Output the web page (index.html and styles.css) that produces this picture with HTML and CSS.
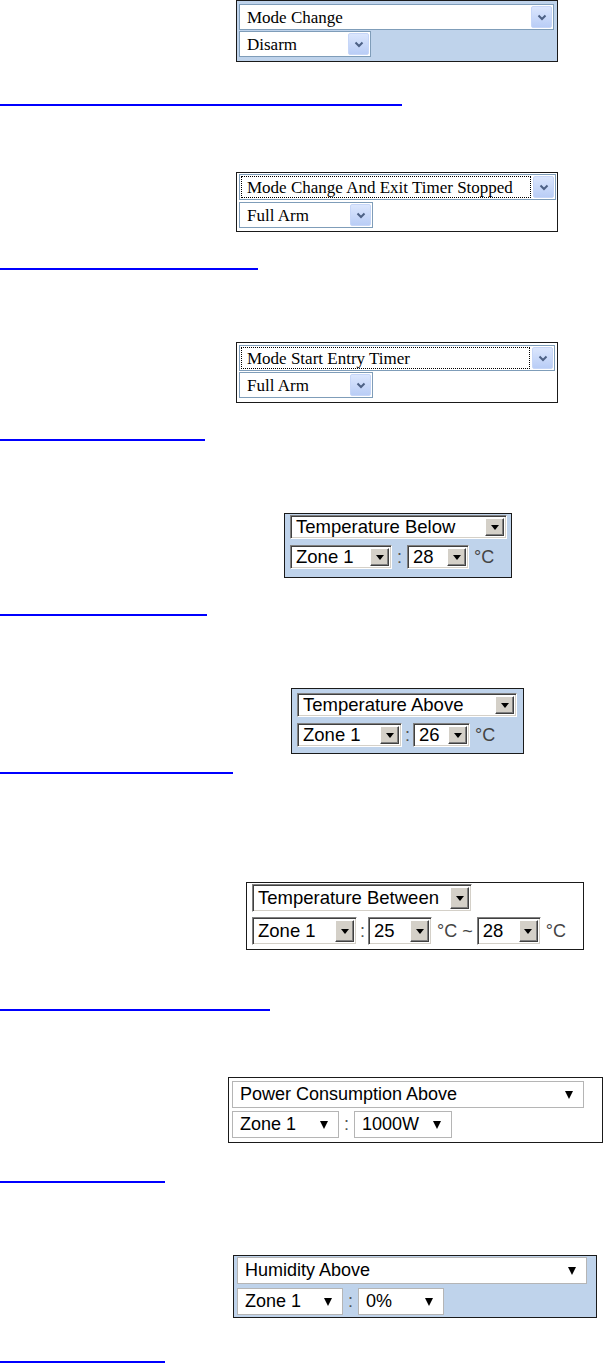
FILE: index.html
```html
<!DOCTYPE html>
<html lang="en">
<head>
  <meta charset="UTF-8" />
  <meta name="viewport" content="width=device-width, initial-scale=1.0"/>
  <title>Rule Conditions</title>
  <link rel="stylesheet" href="styles.css">
</head>
<body>
  <!-- Mode Change -->
  <div class="box box-1 blue">
    <div class="sel xp w-315"><span class="txt">Mode Change</span><span class="btn"><svg width="10" height="7" viewBox="0 0 10 7"><path d="M1.5 1.5 L5 5 L8.5 1.5" stroke="#4d6185" stroke-width="2" fill="none"/></svg></span></div>
    <div class="sel xp w-132"><span class="txt">Disarm</span><span class="btn"><svg width="10" height="7" viewBox="0 0 10 7"><path d="M1.5 1.5 L5 5 L8.5 1.5" stroke="#4d6185" stroke-width="2" fill="none"/></svg></span></div>
  </div>
  <a href="#" class="link link-1"></a>

  <!-- Mode Change And Exit Timer Stopped -->
  <div class="box box-2">
    <div class="sel xp w-317"><span class="txt focus">Mode Change And Exit Timer Stopped</span><span class="btn"><svg width="10" height="7" viewBox="0 0 10 7"><path d="M1.5 1.5 L5 5 L8.5 1.5" stroke="#4d6185" stroke-width="2" fill="none"/></svg></span></div>
    <div class="sel xp w-134"><span class="txt">Full Arm</span><span class="btn"><svg width="10" height="7" viewBox="0 0 10 7"><path d="M1.5 1.5 L5 5 L8.5 1.5" stroke="#4d6185" stroke-width="2" fill="none"/></svg></span></div>
  </div>
  <a href="#" class="link link-2"></a>

  <!-- Mode Start Entry Timer -->
  <div class="box box-3">
    <div class="sel xp w-316"><span class="txt focus">Mode Start Entry Timer</span><span class="btn"><svg width="10" height="7" viewBox="0 0 10 7"><path d="M1.5 1.5 L5 5 L8.5 1.5" stroke="#4d6185" stroke-width="2" fill="none"/></svg></span></div>
    <div class="sel xp w-134"><span class="txt">Full Arm</span><span class="btn"><svg width="10" height="7" viewBox="0 0 10 7"><path d="M1.5 1.5 L5 5 L8.5 1.5" stroke="#4d6185" stroke-width="2" fill="none"/></svg></span></div>
  </div>
  <a href="#" class="link link-3"></a>

  <!-- Temperature Below -->
  <div class="box box-4 blue">
    <div class="sel classic w-217"><span class="txt">Temperature Below</span><span class="btn"><i class="tri"></i></span></div>
    <div class="row">
      <div class="sel classic w-102"><span class="txt">Zone 1</span><span class="btn"><i class="tri"></i></span></div>
      <span class="sep">:</span>
      <div class="sel classic w-62"><span class="txt">28</span><span class="btn"><i class="tri"></i></span></div>
      <span class="unit">°C</span>
    </div>
  </div>
  <a href="#" class="link link-4"></a>

  <!-- Temperature Above -->
  <div class="box box-5 blue">
    <div class="sel classic w-220"><span class="txt">Temperature Above</span><span class="btn"><i class="tri"></i></span></div>
    <div class="row">
      <div class="sel classic w-105"><span class="txt">Zone 1</span><span class="btn"><i class="tri"></i></span></div>
      <span class="sep sep-narrow">:</span>
      <div class="sel classic w-57"><span class="txt">26</span><span class="btn"><i class="tri"></i></span></div>
      <span class="unit">°C</span>
    </div>
  </div>
  <a href="#" class="link link-5"></a>

  <!-- Temperature Between -->
  <div class="box box-6">
    <div class="sel classic tall w-220"><span class="txt">Temperature Between</span><span class="btn"><i class="tri"></i></span></div>
    <div class="row">
      <div class="sel classic tall w-105"><span class="txt">Zone 1</span><span class="btn"><i class="tri"></i></span></div>
      <span class="sep sep-narrow">:</span>
      <div class="sel classic tall w-64"><span class="txt">25</span><span class="btn"><i class="tri"></i></span></div>
      <span class="unit">°C ~</span>
      <div class="sel classic tall w-64"><span class="txt">28</span><span class="btn"><i class="tri"></i></span></div>
      <span class="unit">°C</span>
    </div>
  </div>
  <a href="#" class="link link-6"></a>

  <!-- Power Consumption Above -->
  <div class="box box-7">
    <div class="sel modern w-352"><span class="txt">Power Consumption Above</span><i class="arrow"></i></div>
    <div class="row">
      <div class="sel modern w-107"><span class="txt">Zone 1</span><i class="arrow"></i></div>
      <span class="sep">:</span>
      <div class="sel modern w-98"><span class="txt">1000W</span><i class="arrow"></i></div>
    </div>
  </div>
  <a href="#" class="link link-7"></a>

  <!-- Humidity Above -->
  <div class="box box-8 blue">
    <div class="sel modern w-350"><span class="txt">Humidity Above</span><i class="arrow"></i></div>
    <div class="row">
      <div class="sel modern w-106"><span class="txt">Zone 1</span><i class="arrow"></i></div>
      <span class="sep">:</span>
      <div class="sel modern w-86"><span class="txt">0%</span><i class="arrow"></i></div>
    </div>
  </div>
  <a href="#" class="link link-8"></a>
</body>
</html>
```

FILE: styles.css
```css
body {
  margin: 0;
  background: #fff;
  color: #000;
  font-family: "Liberation Sans", Arial, sans-serif;
}

/* outer boxes */
.box {
  box-sizing: border-box;
  border: 1px solid #1a1a1a;
  display: flex;
  flex-direction: column;
  align-items: flex-start;
  background: #fff;
}

.blue {
  background-color: #bfd3eb;
}

.row {
  display: flex;
  align-items: center;
}

.box-1 { margin: 0 0 0 236px; width: 322px; height: 62px; padding: 3px 0 0 2px; gap: 1px; }
.box-2 { margin: 66px 0 0 236px; width: 322px; height: 60px; padding: 1px 0 0 2px; gap: 2px; }
.box-3 { margin: 72px 0 0 236px; width: 322px; height: 61px; padding: 2px 0 0 2px; gap: 1px; }
.box-4 { margin: 72px 0 0 284px; width: 228px; height: 65px; padding: 1px 0 0 5px; gap: 6px; }
.box-5 { margin: 72px 0 0 291px; width: 233px; height: 66px; padding: 4px 0 0 5px; gap: 6px; }
.box-6 { margin: 108px 0 0 246px; width: 338px; height: 68px; padding: 1px 0 0 5px; gap: 5px; }
.box-7 { margin: 66px 0 0 228px; width: 375px; height: 66px; padding: 3px 0 0 3px; gap: 3px; }
.box-8 { margin: 72px 0 0 233px; width: 364px; height: 63px; padding: 1px 0 0 3px; gap: 4px; }

/* hyperlinks (underline only) */
.link {
  display: block;
  height: 0;
  border-bottom: 2px solid #0000ff;
}

.link-1 { margin-top: 42px; width: 402px; }
.link-2 { margin-top: 36px; width: 258px; }
.link-3 { margin-top: 36px; width: 205px; }
.link-4 { margin-top: 36px; width: 207px; }
.link-5 { margin-top: 18px; width: 233px; }
.link-6 { margin-top: 59px; width: 270px; }
.link-7 { margin-top: 38px; width: 165px; }
.link-8 { margin-top: 43px; width: 165px; }

/* select fields */
.sel {
  box-sizing: border-box;
  display: flex;
  align-items: center;
  background: #fff;
  white-space: nowrap;
}

.sel .txt {
  flex: 1;
  overflow: hidden;
}

.w-57 { width: 57px; }
.w-62 { width: 62px; }
.w-64 { width: 64px; }
.w-86 { width: 86px; }
.w-98 { width: 98px; }
.w-102 { width: 102px; }
.w-105 { width: 105px; }
.w-106 { width: 106px; }
.w-107 { width: 107px; }
.w-132 { width: 132px; }
.w-134 { width: 134px; }
.w-217 { width: 217px; }
.w-220 { width: 220px; }
.w-315 { width: 315px; }
.w-316 { width: 316px; }
.w-317 { width: 317px; }
.w-350 { width: 350px; }
.w-352 { width: 352px; }

/* xp style */
.xp {
  height: 26px;
  border: 1px solid #7f9db9;
  padding: 1px;
  font-family: "Liberation Serif", "Times New Roman", serif;
  font-size: 17px;
}

.xp .txt {
  box-sizing: border-box;
  height: 100%;
  line-height: 22px;
  padding-left: 5px;
  margin-right: 2px;
  border: 1px solid transparent;
}

.xp .txt.focus {
  border: 1px dotted #000;
}

.xp .btn {
  box-sizing: border-box;
  width: 21px;
  height: 22px;
  border: 1px solid #c6d6f8;
  border-radius: 2px;
  background: linear-gradient(#dbe6fd, #b9cdf6);
  display: flex;
  align-items: center;
  justify-content: center;
}

/* classic style */
.classic {
  height: 24px;
  border: 1px solid;
  border-color: #808080 #fff #fff #808080;
  box-shadow: inset 1px 1px #404040, inset -1px -1px #d4d0c8;
  padding: 2px;
  font-size: 18.5px;
}

.classic.tall {
  height: 28px;
}

.classic .txt {
  padding-left: 3px;
  line-height: 20px;
}

.classic .btn {
  box-sizing: border-box;
  width: 19px;
  align-self: stretch;
  background: #d4d0c8;
  border: 1px solid;
  border-color: #fff #404040 #404040 #fff;
  box-shadow: inset -1px -1px #808080;
  display: flex;
  align-items: center;
  justify-content: center;
}

.tri {
  width: 0;
  height: 0;
  border-left: 4px solid transparent;
  border-right: 4px solid transparent;
  border-top: 5px solid #000;
  margin-top: 1px;
}

.sep {
  width: 15px;
  text-align: center;
  font-size: 18px;
  color: #555;
}

.sep-narrow {
  width: 11px;
}

.unit {
  font-size: 18px;
  color: #444;
  margin: 0 4px 0 5px;
}

/* modern style */
.modern {
  height: 27px;
  border: 1px solid #b5b5b5;
  padding: 0 10px 0 7px;
  font-size: 18px;
}

.modern .arrow {
  width: 0;
  height: 0;
  border-left: 4px solid transparent;
  border-right: 4px solid transparent;
  border-top: 8px solid #000;
}
```
